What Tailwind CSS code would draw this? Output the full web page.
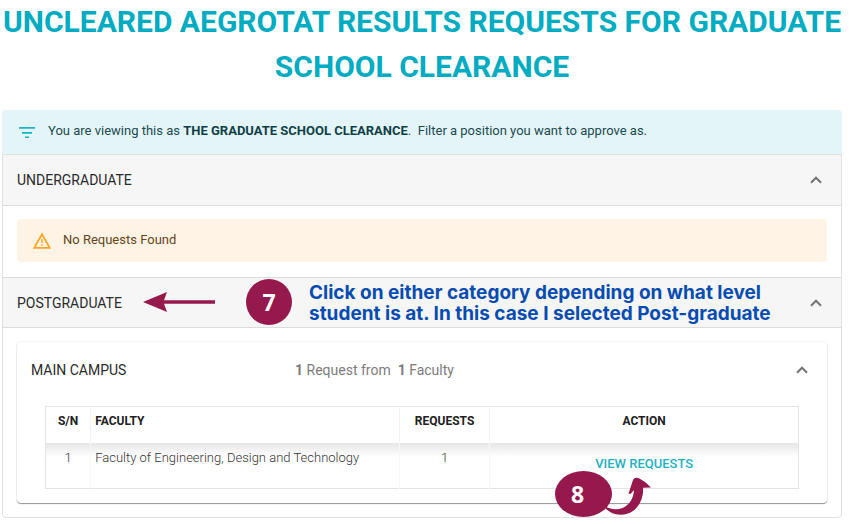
<!DOCTYPE html>
<html lang="en">
<head>
  <meta charset="UTF-8" />
  <meta name="viewport" content="width=device-width, initial-scale=1.0" />
  <title>Uncleared Aegrotat Results Requests</title>
  <script src="https://cdn.jsdelivr.net/npm/@tailwindcss/browser@4"></script>
</head>
<body class="bg-white font-[Roboto,sans-serif] text-sm text-[#2b2b2b]">

  <main class="pl-[2px] pr-[7px] pb-1">
    <h1 class="-mt-px text-center text-[30px] leading-[45px] font-bold text-[#00acc1]">UNCLEARED AEGROTAT RESULTS REQUESTS FOR GRADUATE SCHOOL CLEARANCE</h1>

    <!-- Filter notice -->
    <div class="mt-[21px] flex h-11 items-center rounded-t bg-[#e3f5f8] px-4 text-[13px] text-[#1d4a52]">
      <svg class="mr-3 size-[18px]" viewBox="0 0 18 18" fill="#1fb3c6">
        <path d="M1 4h16v1.7H1zM4 9h10v1.7H4zM7 13.5h4v1.5H7z" />
      </svg>
      <p class="pb-[2px]">You are viewing this as <b class="font-bold text-[#0f3f47]">THE GRADUATE SCHOOL CLEARANCE</b>.&nbsp; Filter a position you want to approve as.</p>
    </div>

    <div class="rounded-b border border-[#e0e0e0]">
      <!-- Undergraduate -->
      <section>
        <button type="button" aria-expanded="true" class="flex h-[51px] w-full items-center justify-between border-b border-[#dcdcdc] bg-[#f6f6f6] pl-[14px] pr-[19px]">
          <span>UNDERGRADUATE</span>
          <svg class="h-2 w-3" viewBox="0 0 12 8" fill="none" stroke="#757575" stroke-width="2"><path d="M1 6.7 6 1.7l5 5" /></svg>
        </button>
        <div class="px-[14px] pt-[13px] pb-[15px]">
          <div class="flex h-[43px] items-center rounded bg-[#fff3e5] px-4 text-[13px] text-[#5f4619]">
            <svg class="mr-3 size-[18px]" viewBox="0 0 18 18" fill="none" stroke="#ffa726">
              <path d="M9 2.2 16.7 15.8H1.3z" stroke-width="1.8" />
              <path d="M9 7v3.8M9 12.2v1.6" stroke-width="1.5" />
            </svg>
            <p>No Requests Found</p>
          </div>
        </div>
      </section>

      <!-- Postgraduate -->
      <section class="relative">
        <button type="button" aria-expanded="true" class="flex h-[51px] w-full items-center justify-between border-y border-[#dcdcdc] bg-[#f6f6f6] pl-[14px] pr-[19px]">
          <span>POSTGRADUATE</span>
          <svg class="h-2 w-3" viewBox="0 0 12 8" fill="none" stroke="#757575" stroke-width="2"><path d="M1 6.7 6 1.7l5 5" /></svg>
        </button>

        <!-- Step 7 -->
        <div class="absolute top-[2px] left-[140px] flex items-center">
          <svg class="h-5 w-[72px]" viewBox="0 0 72 20" fill="#96194d">
            <path d="M0 10 24 0 21 8.3H72v3.4H21L24 20z" />
          </svg>
          <span class="ml-[31px] flex size-[46px] items-center justify-center rounded-full bg-[#96194d] font-['Open_Sans',sans-serif] text-[23px] font-bold text-white">7</span>
          <p class="ml-[17px] pt-[2px] font-[Inter,sans-serif] text-[19px] leading-[21px] font-bold whitespace-nowrap text-[#064cb0]">Click on either category depending on what level<br />student is at. In this case I selected Post-graduate</p>
        </div>

        <div class="p-[14px]">
          <div class="rounded shadow-[0_1px_1px_rgba(0,0,0,0.4),0_0_2px_rgba(0,0,0,0.12)]">
            <button type="button" aria-expanded="true" class="flex h-14 w-full items-center pl-[14px] pr-[19px]">
              <span class="w-[264px] text-left">MAIN CAMPUS</span>
              <span class="text-[#7c7c7c]"><b>1</b> Request from &nbsp;<b>1</b> Faculty</span>
              <svg class="ml-auto h-2 w-3" viewBox="0 0 12 8" fill="none" stroke="#757575" stroke-width="2"><path d="M1 6.7 6 1.7l5 5" /></svg>
            </button>

            <div class="px-7 pt-2 pb-[14px]">
              <table class="w-full table-fixed border-collapse border border-[#e3e3e3] text-[13px]">
                <colgroup>
                  <col class="w-[6%]" />
                  <col class="w-[41%]" />
                  <col class="w-[12%]" />
                  <col class="w-[41%]" />
                </colgroup>
                <thead class="text-[12px] text-[#212121]">
                  <tr class="h-9 align-top">
                    <th class="border-r border-[#f2f2f2] pt-[6px]">S/N</th>
                    <th class="border-r border-[#f2f2f2] pt-[6px] pl-1 text-left">FACULTY</th>
                    <th class="border-r border-[#f2f2f2] pt-[6px]">REQUESTS</th>
                    <th class="pt-[6px]">ACTION</th>
                  </tr>
                </thead>
                <tbody class="font-light">
                  <tr class="h-[46px] bg-linear-to-b from-[#e6e6e6] to-white to-30% align-top text-[#333]">
                    <td class="border-r border-[#f7f7f7] pt-[6px] text-center">1</td>
                    <td class="border-r border-[#f7f7f7] pt-[6px] pl-1">Faculty of Engineering, Design and Technology</td>
                    <td class="border-r border-[#f7f7f7] pt-[6px] text-center">1</td>
                    <td class="pt-[12px] text-center"><a href="#" class="text-[13px] font-medium text-[#1fb0c3]">VIEW REQUESTS</a></td>
                  </tr>
                </tbody>
              </table>
            </div>
          </div>
        </div>

        <!-- Step 8 -->
        <span class="absolute bottom-0 left-[552px] flex h-[46px] w-[57px] items-center justify-center rounded-[50%] bg-[#96194d] pr-3 font-['Open_Sans',sans-serif] text-[23px] font-bold text-white">8</span>
        <svg class="absolute bottom-0 left-[599px] h-[41px] w-[50px]" viewBox="0 0 50 41" fill="#96194d">
          <path d="M2 29.500C9 34.500 18 34.500 24 30C30 25.500 31.500 20 32 14L28.500 18L26.500 17.500L31 4Q32.500 .5 37 2.200Q43 5 49 11.500L41 11.700C42 21 37 34 26 37.500C16 40.500 8 37.500 2 31z" />
        </svg>
      </section>
    </div>
  </main>

</body>
</html>
